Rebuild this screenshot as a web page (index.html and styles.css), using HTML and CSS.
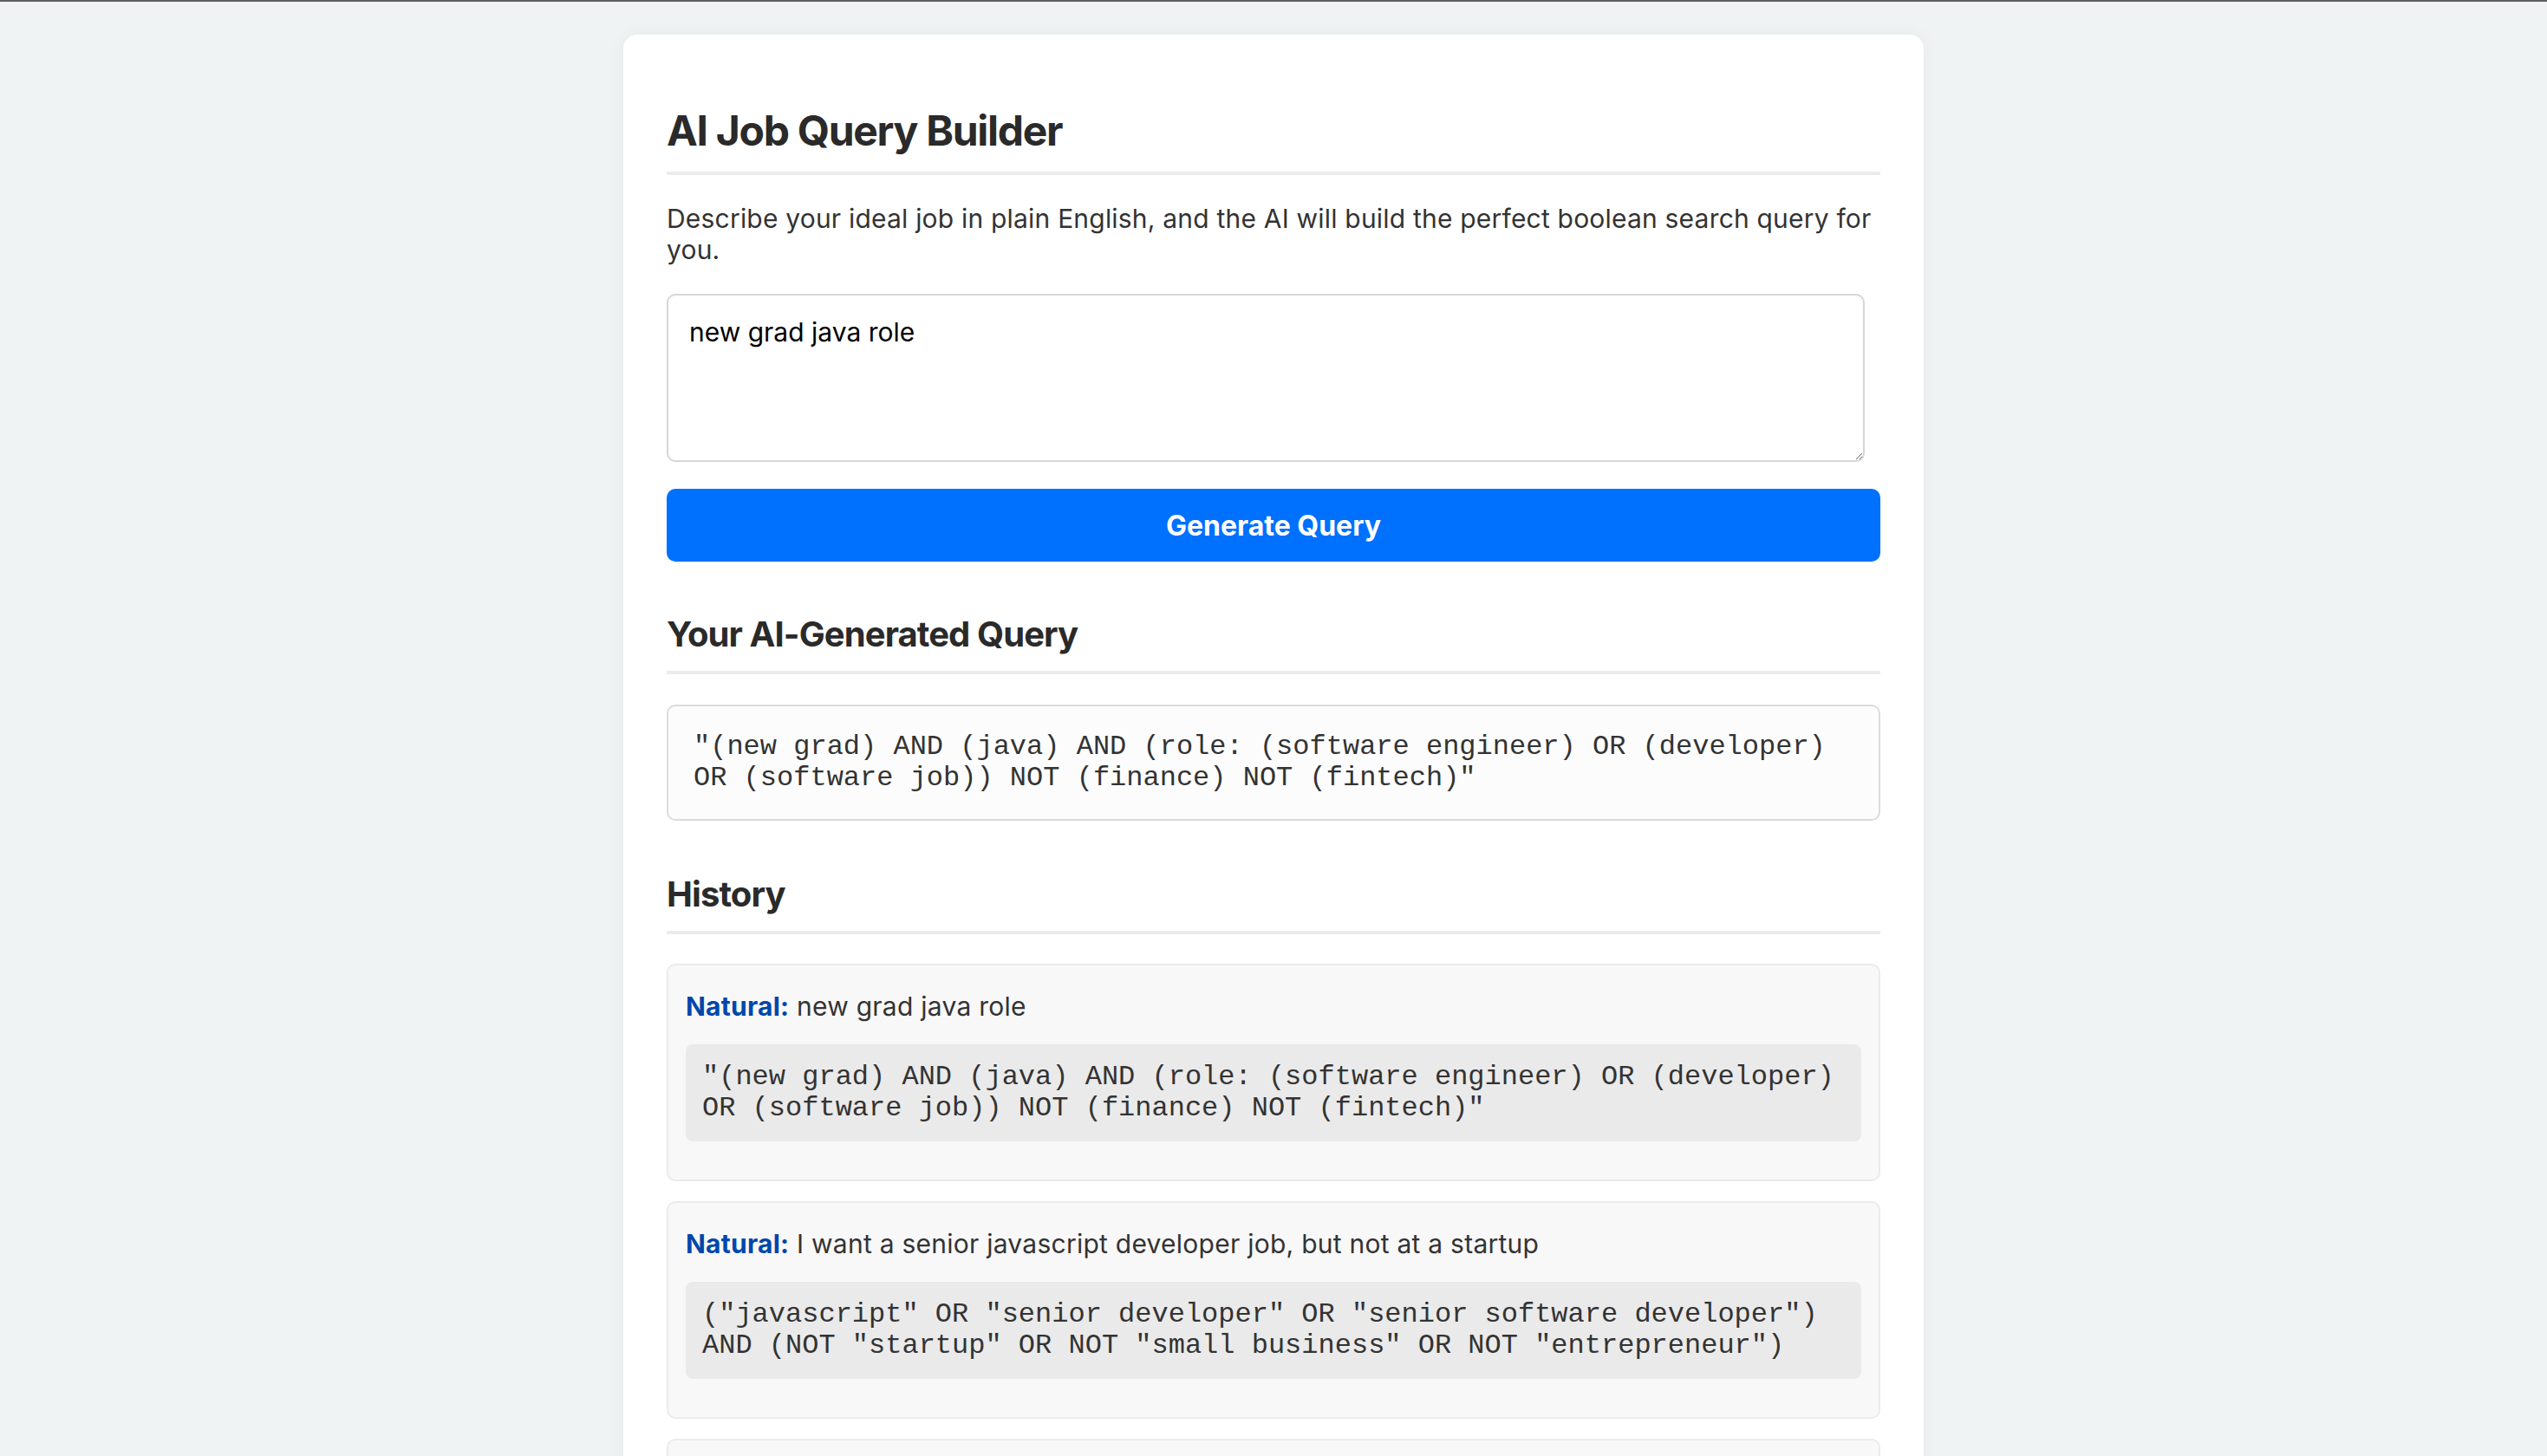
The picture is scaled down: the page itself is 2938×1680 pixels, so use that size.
FILE: index.html
```html
<!DOCTYPE html>
<html lang="en">
<head>
<meta charset="utf-8">
<title>AI Job Query Builder</title>
<link rel="stylesheet" href="styles.css">
</head>
<body>
<main class="card">
  <h1 class="title">AI Job Query Builder</h1>
  <p class="intro">Describe your ideal job in plain English, and the AI will build the perfect boolean search query for you.</p>
  <textarea class="input">new grad java role</textarea>
  <button class="generate">Generate Query</button>

  <h2 class="section-title">Your AI-Generated Query</h2>
  <pre class="query-box">"(new grad) AND (java) AND (role: (software engineer) OR (developer) OR (software job)) NOT (finance) NOT (fintech)"</pre>

  <h2 class="section-title history-title">History</h2>
  <div class="history">
    <div class="item">
      <p class="natural"><span class="label">Natural:</span> new grad java role</p>
      <pre class="item-query">"(new grad) AND (java) AND (role: (software engineer) OR (developer) OR (software job)) NOT (finance) NOT (fintech)"</pre>
    </div>
    <div class="item">
      <p class="natural"><span class="label">Natural:</span> I want a senior javascript developer job, but not at a startup</p>
      <pre class="item-query">("javascript" OR "senior developer" OR "senior software developer") AND (NOT "startup" OR NOT "small business" OR NOT "entrepreneur")</pre>
    </div>
    <div class="item">
      <p class="natural"><span class="label">Natural:</span> remote python data engineer</p>
      <pre class="item-query">("python") AND ("data engineer") AND ("remote")</pre>
    </div>
  </div>
</main>
</body>
</html>
```
FILE: styles.css
```css
body {
  margin: 0;
  background: #f0f3f3;
  border-top: 2px solid #5f5f5f;
  font-family: Inter, "Noto Sans", sans-serif;
  color: #333;
}

.card {
  width: 1500px;
  box-sizing: border-box;
  margin: 38px auto 0;
  padding: 50px;
  background: #fff;
  border-radius: 16px;
  box-shadow: 0 0 20px rgba(0, 0, 0, 0.05);
}

.title {
  margin: 32px 0;
  padding-bottom: 18px;
  border-bottom: 4px solid #ebebeb;
  font-size: 48px;
  line-height: 58px;
  font-weight: 700;
  letter-spacing: -1.3px;
  color: #2a2a2a;
}

.intro {
  margin: 0 0 33px;
  font-size: 30px;
  line-height: 36px;
  letter-spacing: 0.2px;
}

.input {
  display: block;
  width: 1382px;
  height: 194px;
  box-sizing: border-box;
  margin: 0;
  padding: 24px;
  border: 2px solid #d6d6d6;
  border-radius: 10px;
  font-family: Inter, "Noto Sans", sans-serif;
  font-size: 30px;
  line-height: 36px;
  color: #000;
  resize: vertical;
}

.generate {
  display: block;
  width: 100%;
  height: 84px;
  margin-top: 31px;
  border: 0;
  border-radius: 10px;
  background: #0070ff;
  color: #fff;
  font-family: Inter, "Noto Sans", sans-serif;
  font-size: 32px;
  font-weight: 700;
}

.section-title {
  margin: 60px 0 35px;
  padding-bottom: 18px;
  border-bottom: 4px solid #ebebeb;
  font-size: 40px;
  line-height: 48px;
  font-weight: 700;
  letter-spacing: -0.9px;
  color: #2a2a2a;
}

.history-title {
  margin-top: 61px;
  margin-bottom: 34px;
}

.query-box {
  margin: 0;
  padding: 29px 29px;
  border: 2px solid #dcdcdc;
  border-radius: 10px;
  background: #fcfcfc;
  font-family: "Liberation Mono", "Courier New", monospace;
  font-size: 32px;
  line-height: 36px;
  white-space: pre-wrap;
  color: #333;
}

.item {
  margin-bottom: 23px;
  padding: 22px 20px;
  border: 2px solid #ebebeb;
  border-radius: 10px;
  background: #f8f8f8;
}

.natural {
  margin: 7px 0 0;
  font-size: 30px;
  line-height: 36px;
  letter-spacing: 0.25px;
  color: #333;
}

.label {
  font-weight: 700;
  color: #0047ab;
}

.item-query {
  margin: 26px 0 22px;
  padding: 20px 19px;
  border-radius: 8px;
  background: #eaeaea;
  font-family: "Liberation Mono", "Courier New", monospace;
  font-size: 32px;
  line-height: 36px;
  white-space: pre-wrap;
  color: #333;
}
```
